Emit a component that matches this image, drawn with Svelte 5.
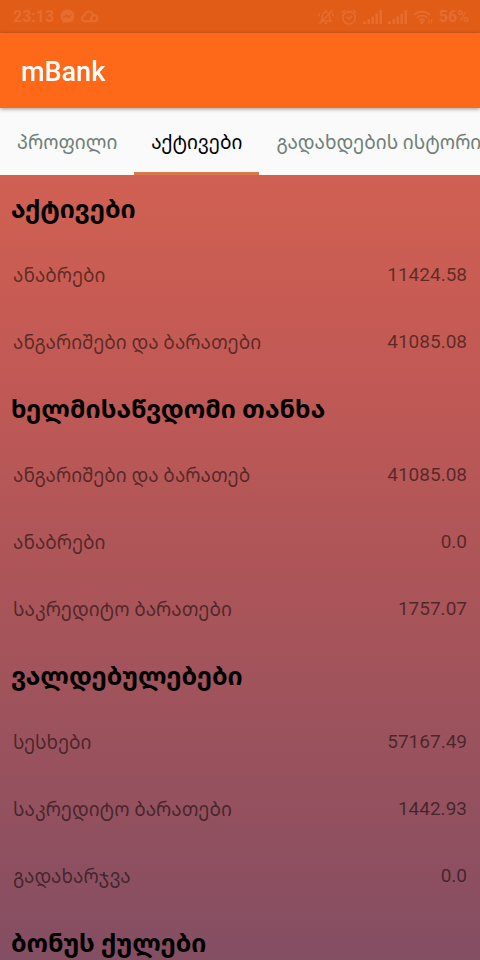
<script>
  const tabs = ['პროფილი', 'აქტივები', 'გადახდების ისტორია'];
  let active = $state(1);

  const sections = [
    {
      title: 'აქტივები',
      rows: [
        ['ანაბრები', '11424.58'],
        ['ანგარიშები და ბარათები', '41085.08'],
      ],
    },
    {
      title: 'ხელმისაწვდომი თანხა',
      rows: [
        ['ანგარიშები და ბარათებ', '41085.08'],
        ['ანაბრები', '0.0'],
        ['საკრედიტო ბარათები', '1757.07'],
      ],
    },
    {
      title: 'ვალდებულებები',
      rows: [
        ['სესხები', '57167.49'],
        ['საკრედიტო ბარათები', '1442.93'],
        ['გადახარჯვა', '0.0'],
      ],
    },
    { title: 'ბონუს ქულები', rows: [] },
  ];
</script>

<div class="screen">
  <div class="status">
    <div class="group left">
      <span>23:13</span>
      <svg width="15" height="15" viewBox="0 0 16 16">
        <path fill="currentColor" fill-rule="evenodd" d="M8 .6C3.700.6.6 3.600.6 7.600c0 2 .8 3.800 2.200 5.100V15.400l2.400-1.200c.9.300 1.800.4 2.800.4 4.300 0 7.400-3 7.400-7S12.300.6 8 .6ZM2.600 10.300 6.500 5.400l2.600 2.100 4.300-2.400-3.900 5-2.700-2.100Z" />
      </svg>
      <svg width="18" height="14" viewBox="0 0 18 14" fill="none" stroke="currentColor" stroke-width="2">
        <path d="M10 11.300H4.200a3 3 0 0 1-.3-6C4.300 3 5.900 1.500 8 1.500c2.300 0 3.800 1.500 4.200 3.700" />
        <circle cx="13.400" cy="8.300" r="3" />
        <path d="M10.400 8.300c0 1.800-.8 3-2.400 3" />
      </svg>
    </div>
    <div class="group right">
      <svg width="18" height="16" viewBox="0 0 18 16" fill="none" stroke="currentColor" stroke-width="1.500">
        <path d="M4 12h10l-1.500-2V6.500a3.500 3.500 0 0 0-7 0V10ZM7.500 14.300h3M9 1v2M2.800 4 1.500 7M15.200 4l1.300 3M2.500 15 15.500 1" />
      </svg>
      <svg width="16" height="16" viewBox="0 0 16 16" fill="none" stroke="currentColor" stroke-width="1.600">
        <circle cx="8" cy="8.800" r="6.200" />
        <path d="M5.200 7.500 8 10l3.200-3M.8 4l3.200-3M15.200 4 12 1" />
      </svg>
      {#each [0, 1] as signal (signal)}
        <svg width="19" height="14" viewBox="0 0 19 14" fill="currentColor">
          <path d="M0 11.500h3V14H0zM4.500 9h2.500v5H4.500zM8.500 6.500H11V14H8.500zM12.500 3.500H15V14h-2.500zM16.500 0H19v14h-2.500z" />
        </svg>
      {/each}
      <svg width="20" height="16" viewBox="0 0 20 16" fill="none" stroke="currentColor" stroke-width="1.800">
        <path d="M1 5.800c4.600-4.200 11.400-4.200 16 0M3.700 8.800c3.100-2.800 7.500-2.800 10.600 0M6.400 11.500c1.500-1.400 3.700-1.400 5.200 0" />
        <circle cx="9" cy="13.500" r=".8" fill="currentColor" />
        <path stroke-width="1" d="M16.200 10v4.500m-1.500-1.500 1.500 1.500M18.500 14.500V10m0 0 1.200 1.300" />
      </svg>
      <span>56%</span>
    </div>
  </div>

  <header><h1>mBank</h1></header>

  <div class="tabs" role="tablist">
    {#each tabs as tab, i (tab)}
      <button role="tab" aria-selected={active === i} class:active={active === i} onclick={() => (active = i)}>{tab}</button>
    {/each}
  </div>

  <main>
    {#each sections as section (section.title)}
      <section>
        <h2>{section.title}</h2>
        <dl>
          {#each section.rows as [label, value] (label)}
            <div class="row">
              <dt>{label}</dt>
              <dd>{value}</dd>
            </div>
          {/each}
        </dl>
      </section>
    {/each}
  </main>
</div>

<style>
  :global(body) {
    margin: 0;
  }
  .screen {
    display: flex;
    flex-direction: column;
    height: 100vh;
    overflow: hidden;
    font-family: Roboto, 'Noto Sans Georgian', 'Noto Sans', 'DejaVu Sans', sans-serif;
  }
  .status {
    flex: none;
    display: flex;
    align-items: center;
    justify-content: space-between;
    height: 33px;
    padding: 0 11px 0 13px;
    background: #e15d17;
    color: #e66c30;
    font-size: 16px;
    font-weight: 700;
  }
  .group {
    display: flex;
    align-items: center;
    gap: 6px;
  }
  header {
    flex: none;
    box-sizing: border-box;
    display: flex;
    align-items: center;
    height: 75px;
    padding: 3px 21px 0;
    background: #fe6919;
    box-shadow: 0 1px 4px rgba(0, 0, 0, 0.4);
    z-index: 1;
  }
  h1 {
    margin: 0;
    color: #fff;
    font-size: 27px;
    font-weight: 500;
    line-height: 32px;
  }
  .tabs {
    flex: none;
    display: flex;
    height: 67px;
    background: #fafafa;
    overflow-x: auto;
    overflow-y: hidden;
    scrollbar-width: none;
  }
  button {
    flex: none;
    box-sizing: border-box;
    padding: 4px 17px 0;
    border: 0;
    border-bottom: 3px solid transparent;
    background: none;
    color: #6f7f78;
    font-family: inherit;
    font-size: 19px;
    white-space: nowrap;
    cursor: pointer;
  }
  button.active {
    border-bottom-color: #d5794a;
    color: #000;
  }
  main {
    flex: 1;
    min-height: 0;
    overflow: hidden;
    background: linear-gradient(#d06052, #c25955 25%, #a6545a 58%, #844e63);
  }
  h2 {
    display: flex;
    align-items: center;
    height: 66px;
    margin: 0;
    padding: 0 11px;
    color: #000;
    font-size: 25px;
    font-weight: 700;
    white-space: nowrap;
  }
  dl,
  dd {
    margin: 0;
  }
  .row {
    display: flex;
    align-items: center;
    justify-content: space-between;
    height: 67px;
    padding: 0 13px;
    color: rgba(0, 0, 0, 0.54);
    font-size: 19px;
  }
</style>
